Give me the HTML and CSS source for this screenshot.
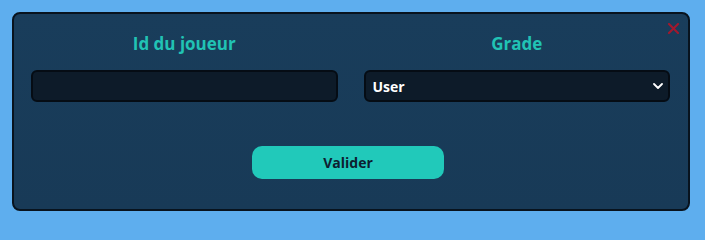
FILE: index.html
```html
<!DOCTYPE html>
<html lang="fr">
<head>
<meta charset="utf-8">
<title>Grade</title>
<link rel="stylesheet" href="styles.css">
</head>
<body>
<div class="panel">
  <button class="close" aria-label="Fermer">
    <svg width="11" height="11" viewBox="0 0 11 11"><path d="M1 1L10 10M10 1L1 10" stroke="#a3182d" stroke-width="2" stroke-linecap="square"/></svg>
  </button>
  <div class="fields">
    <div class="field">
      <label class="label" for="pid">Id du joueur</label>
      <input id="pid" class="input" type="text">
    </div>
    <div class="field">
      <label class="label" for="grade">Grade</label>
      <div class="select-wrap">
        <select id="grade" class="select">
          <option>User</option>
        </select>
        <svg class="chev" width="10" height="6" viewBox="0 0 10 6"><path d="M1 1L5 5L9 1" fill="none" stroke="#ffffff" stroke-width="1.8" stroke-linecap="round" stroke-linejoin="round"/></svg>
      </div>
    </div>
  </div>
  <div class="actions">
    <button class="submit">Valider</button>
  </div>
</div>
</body>
</html>
```
FILE: styles.css
```css
* { box-sizing: border-box; }
html { background: #5eaeee; }
body {
  margin: 0;
  background: #5eaeee;
  font-family: "Open Sans", "Noto Sans", sans-serif;
  padding: 12px 0 0 12px;
}
.panel {
  position: relative;
  width: 678px;
  height: 199px;
  border: 2px solid #08131e;
  border-radius: 8px;
  background: linear-gradient(180deg, #193d5b 0%, #183a57 100%);
  padding: 19px 18px 0 17px;
  display: flex;
  flex-direction: column;
}
.close {
  position: absolute;
  top: 9px;
  right: 9px;
  width: 11px;
  height: 11px;
  padding: 0;
  border: 0;
  background: none;
  display: flex;
}
.fields {
  display: grid;
  grid-template-columns: 1fr 1fr;
  column-gap: 26px;
}
.field {
  display: flex;
  flex-direction: column;
  align-items: stretch;
}
.label {
  text-align: center;
  color: #21c3b4;
  font-weight: 700;
  font-size: 17px;
  line-height: 22px;
  margin-bottom: 15px;
}
.input, .select {
  height: 32px;
  width: 100%;
  border: 2px solid #050c14;
  border-radius: 6px;
  background: #0d1b29;
  color: #ffffff;
  font-family: inherit;
  outline: none;
}
.select-wrap { position: relative; }
.select {
  appearance: none;
  -webkit-appearance: none;
  font-weight: 700;
  font-size: 14px;
  padding: 0 0 0 7px;
}
.chev {
  position: absolute;
  right: 7px;
  top: 13px;
  pointer-events: none;
}
.actions {
  margin-top: 44px;
  display: flex;
  padding-left: 221px;
}
.submit {
  width: 192px;
  height: 33px;
  border: 0;
  border-radius: 10px;
  background: #21c9ba;
  color: #0d2030;
  font-family: inherit;
  font-weight: 700;
  font-size: 14px;
}
```
